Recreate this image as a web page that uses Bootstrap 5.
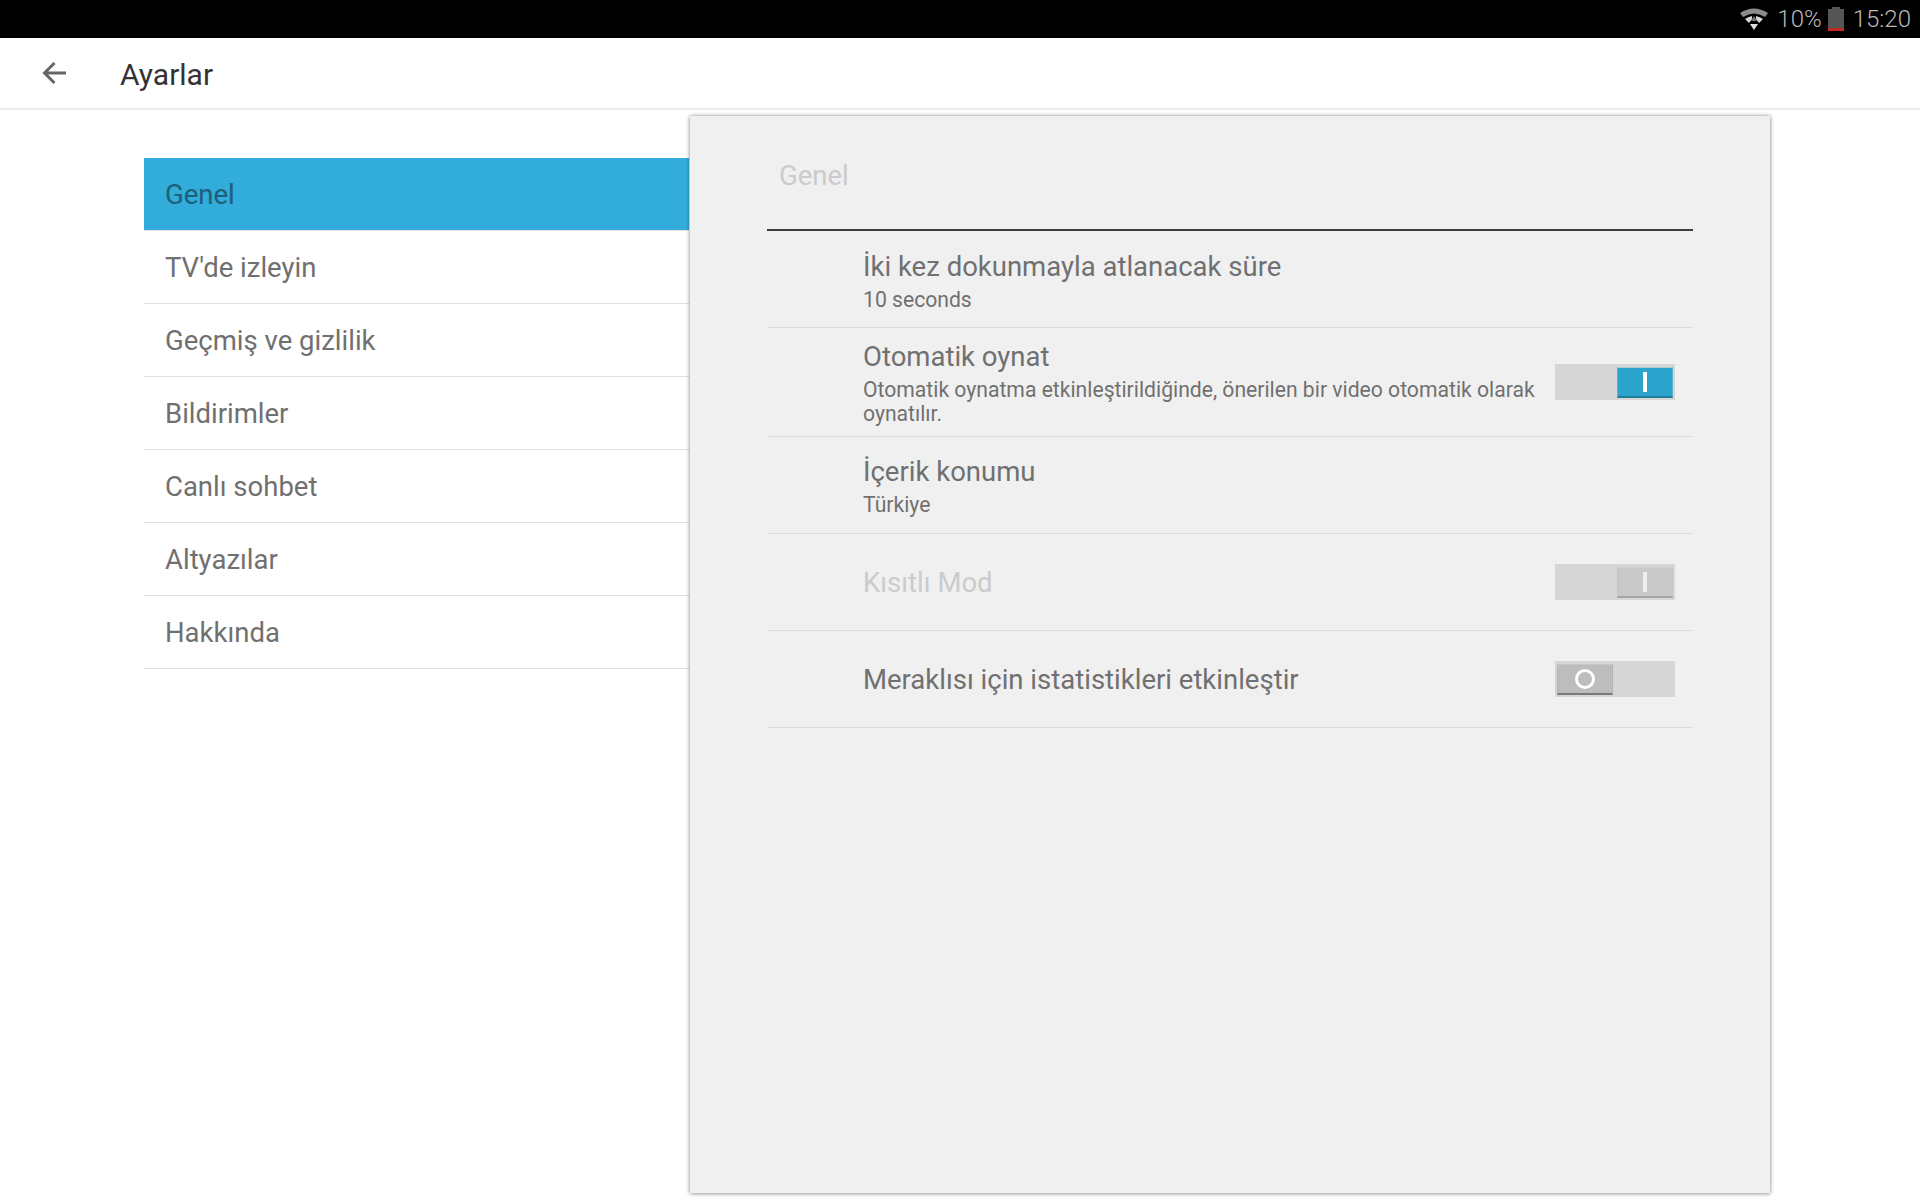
<!DOCTYPE html>
<html lang="tr"><head><meta charset="utf-8"><title>Ayarlar</title>
<link href="https://cdn.jsdelivr.net/npm/bootstrap@5.3.0/dist/css/bootstrap.min.css" rel="stylesheet">
<style>
html,body{height:1200px;overflow:hidden}
body{font-family:Roboto,"Liberation Sans",sans-serif;background:#fff;color:#666}
.statusbar{height:38px;background:#000;color:#b8b8b8;font-size:24px;font-weight:300;padding-right:9px}
.wifi-ic{margin-right:8px}
.pct{margin-right:6px}
.batt-ic{margin-right:9px}
.appbar{height:72px;border-bottom:2px solid #ececec;color:#333}
.backslot{width:120px;padding-left:42px}
.apptitle{font-size:30px;color:#333;padding-top:2px}
.main-area{height:1090px}
.sidecol{width:690px;padding:48px 1px 0 144px}
.sideitem{height:73px;line-height:73px;font-size:27.5px;padding-left:21px;border-bottom:1px solid #e0e0e0;color:#707070}
.sideitem.is-active{background:#31acdb;color:#1d6077;border-bottom-color:#e4e4e4}
.panel{width:1080px;height:1077px;margin-top:6px;background:#f0f0f0;box-shadow:0 0 4px rgba(0,0,0,.45),0 2px 4px rgba(0,0,0,.1);padding:0 77px}
.panelhead{height:115px;border-bottom:2px solid #3c3c3c;font-size:27.5px;color:#cbcbcb;padding:40px 0 0 12px;line-height:40px}
.setrow{border-bottom:1px solid #dcdcdc;padding-left:96px;padding-right:18px}
.settitle{font-size:27.5px;line-height:36px;color:#707070}
.single{padding-top:2px}
.setsub{font-size:21.15px;line-height:24px;color:#707070;margin-top:3px}
.firstrow{padding-top:2px}
.dim{color:#cbcbcb}
.tog{width:120px;height:36px;background:#d6d6d6;flex:none;padding:3px 2px 2px}
.tog-knob{width:56px;height:100%;display:flex;align-items:center;justify-content:center;border:1px solid #c8c8c8}
.knob-on{background:#2ba3cc;border-color:#b4c8d0 #5cb0cc #1f7e9e;border-bottom-width:2px}
.knob-off{background:#c9c9c9;border-color:#cfcfcf #c4c4c4 #a6a6a6;border-bottom-width:2px}
.knob-gray{background:#bdbdbd;border-color:#c8c8c8 #b4b4b4 #7a7a7a;border-bottom-width:2px}
.bar-i{width:4px;height:20px;background:#fff}
.bar-dim{background:#eee}
.ring{width:20px;height:20px;border:3px solid #fff;border-radius:50%}
</style></head><body>
<div class="statusbar d-flex align-items-center justify-content-end">
<svg class="wifi-ic" width="30" height="24" viewBox="0 0 30 24"><path d="M1 6Q15-3 29 6L26 10Q15 3 4 10Z" fill="#8c8c8c"/><path d="M6 12Q9 10 13 9V12L10 16ZM24 12Q21 10 17 9V12L20 16Z" fill="#d8d8d8"/><path d="M15 9 12 14H18Z" fill="#777"/><path d="M11 17H19L15 23Z" fill="#e0e0e0"/></svg>
<span class="pct">10%</span>
<svg class="batt-ic" width="16" height="24" viewBox="0 0 16 24"><rect x="4" y="0" width="8" height="2" fill="#555"/><rect y="2" width="16" height="19" fill="#555"/><rect y="21" width="16" height="3" fill="#c0291f"/></svg>
<span>15:20</span></div>
<div class="appbar d-flex align-items-center"><div class="backslot d-flex"><svg width="24" height="24" viewBox="0 0 24 24"><path d="M24 12H3M12.500 2 2.500 12l10 10" fill="none" stroke="#666" stroke-width="3"/></svg></div><div class="apptitle">Ayarlar</div></div>
<div class="main-area d-flex">
<div class="sidecol">
<div class="sideitem is-active">Genel</div>
<div class="sideitem">TV'de izleyin</div>
<div class="sideitem">Geçmiş ve gizlilik</div>
<div class="sideitem">Bildirimler</div>
<div class="sideitem">Canlı sohbet</div>
<div class="sideitem">Altyazılar</div>
<div class="sideitem">Hakkında</div>
</div>
<div class="panel">
<div class="panelhead">Genel</div>
<div class="setrow firstrow d-flex align-items-center" style="height:97px"><div><div class="settitle">İki kez dokunmayla atlanacak süre</div><div class="setsub">10 seconds</div></div></div>
<div class="setrow d-flex align-items-center gap-3" style="height:109px"><div class="flex-grow-1"><div class="settitle">Otomatik oynat</div><div class="setsub">Otomatik oynatma etkinleştirildiğinde, önerilen bir video otomatik olarak oynatılır.</div></div><div class="tog d-flex justify-content-end"><div class="tog-knob knob-on"><div class="bar-i"></div></div></div></div>
<div class="setrow d-flex align-items-center" style="height:97px"><div><div class="settitle">İçerik konumu</div><div class="setsub">Türkiye</div></div></div>
<div class="setrow d-flex align-items-center justify-content-between" style="height:97px"><div class="settitle dim single">Kısıtlı Mod</div><div class="tog d-flex justify-content-end"><div class="tog-knob knob-off"><div class="bar-i bar-dim"></div></div></div></div>
<div class="setrow d-flex align-items-center justify-content-between" style="height:97px"><div class="settitle single">Meraklısı için istatistikleri etkinleştir</div><div class="tog d-flex"><div class="tog-knob knob-gray"><div class="ring"></div></div></div></div>
</div></div>
<script src="https://cdn.jsdelivr.net/npm/bootstrap@5.3.0/dist/js/bootstrap.bundle.min.js"></script>
</body></html>
